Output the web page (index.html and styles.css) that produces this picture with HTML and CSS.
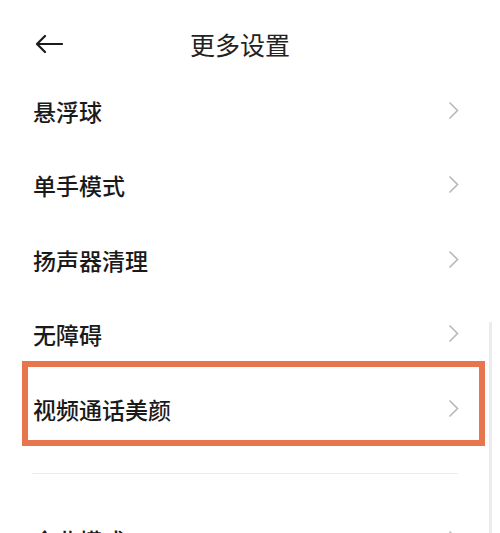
FILE: index.html
```html
<!DOCTYPE html>
<html lang="zh-CN">
<head>
<meta charset="utf-8">
<title>更多设置</title>
<link rel="stylesheet" href="styles.css">
</head>
<body>
<div class="screen">
  <div class="statusbar"></div>
  <header class="header">
    <svg class="back" width="28" height="20" viewBox="0 0 28 20">
      <path d="M27 10H2M10 2L2 10L10 18" fill="none" stroke="#1a1a1a" stroke-width="2.2" stroke-linecap="round" stroke-linejoin="round"/>
    </svg>
    <h1 class="title">更多设置</h1>
  </header>
  <ul class="list">
    <li class="row"><span>悬浮球</span><svg class="chev" width="11" height="19" viewBox="0 0 11 19"><path d="M1.5 1.5L9.5 9.5L1.5 17.5" fill="none" stroke="#b8b8b8" stroke-width="1.6"/></svg></li>
    <li class="row"><span>单手模式</span><svg class="chev" width="11" height="19" viewBox="0 0 11 19"><path d="M1.5 1.5L9.5 9.5L1.5 17.5" fill="none" stroke="#b8b8b8" stroke-width="1.6"/></svg></li>
    <li class="row"><span>扬声器清理</span><svg class="chev" width="11" height="19" viewBox="0 0 11 19"><path d="M1.5 1.5L9.5 9.5L1.5 17.5" fill="none" stroke="#b8b8b8" stroke-width="1.6"/></svg></li>
    <li class="row"><span>无障碍</span><svg class="chev" width="11" height="19" viewBox="0 0 11 19"><path d="M1.5 1.5L9.5 9.5L1.5 17.5" fill="none" stroke="#b8b8b8" stroke-width="1.6"/></svg></li>
    <li class="row highlighted"><span>视频通话美颜</span><svg class="chev" width="11" height="19" viewBox="0 0 11 19"><path d="M1.5 1.5L9.5 9.5L1.5 17.5" fill="none" stroke="#b8b8b8" stroke-width="1.6"/></svg><div class="mark"></div></li>
  </ul>
  <div class="divider"></div>
  <ul class="list">
    <li class="row"><span>企业模式</span><svg class="chev" width="11" height="19" viewBox="0 0 11 19"><path d="M1.5 1.5L9.5 9.5L1.5 17.5" fill="none" stroke="#b8b8b8" stroke-width="1.6"/></svg></li>
  </ul>
  <div class="scrollbar"></div>
</div>
</body>
</html>
```
FILE: styles.css
```css
html, body {
  margin: 0;
  padding: 0;
  background: #ffffff;
}
body {
  font-family: "Noto Sans CJK SC", "Noto Sans", sans-serif;
  color: #1a1a1a;
}
.screen {
  position: relative;
  width: 500px;
  height: 533px;
  overflow: hidden;
  background: #fff;
}
.statusbar {
  height: 20px;
}
.header {
  position: relative;
  height: 52px;
  display: flex;
  align-items: center;
  justify-content: center;
  padding-right: 20px;
}
.back {
  position: absolute;
  left: 35px;
  top: 14px;
}
.title {
  margin: 0;
  margin-top: -4px;
  font-size: 25px;
  font-weight: 400;
  letter-spacing: 0;
  line-height: 1;
  color: #222;
}
.list {
  list-style: none;
  margin: 0;
  padding: 0;
}
.list:first-of-type {
  margin-top: 1px;
}
.row {
  position: relative;
  height: 74.5px;
  display: flex;
  align-items: center;
  justify-content: space-between;
  padding: 0 41px 0 33px;
  font-size: 23px;
  font-weight: 500;
}
.row span {
  line-height: 1;
  margin-top: 2px;
}
.mark {
  position: absolute;
  left: 22px;
  right: 15px;
  top: -10px;
  bottom: 0;
  border: 6px solid #e8764c;
  box-sizing: border-box;
}
.divider {
  margin: 27px 42px 29px 32px;
  height: 1px;
  background: #ececec;
}
.scrollbar {
  position: absolute;
  left: 489px;
  top: 322px;
  width: 3px;
  bottom: 0;
  background: #ececec;
}
```
